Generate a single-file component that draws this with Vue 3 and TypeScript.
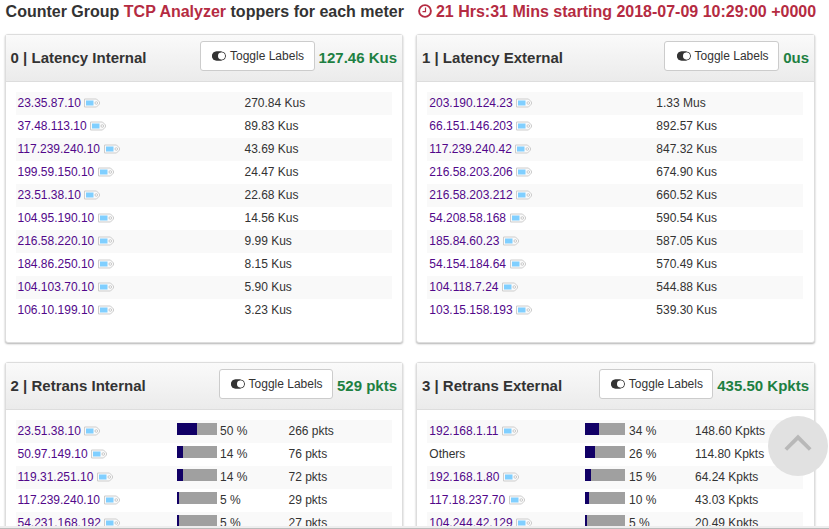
<script setup lang="ts">
interface Row { ip: string; value: string; pct?: number; fill?: number }
interface Panel { title: string; total: string; rows: Row[]; bars?: boolean }

const simple = (items: [string, string][]): Row[] => items.map(([ip, value]) => ({ ip, value }))
const shares = (items: [string, number, number, string][]): Row[] =>
  items.map(([ip, pct, fill, value]) => ({ ip, pct, fill, value }))

const panels: Panel[] = [
  { title: '0 | Latency Internal', total: '127.46 Kus', rows: simple([
    ['23.35.87.10', '270.84 Kus'], ['37.48.113.10', '89.83 Kus'], ['117.239.240.10', '43.69 Kus'],
    ['199.59.150.10', '24.47 Kus'], ['23.51.38.10', '22.68 Kus'], ['104.95.190.10', '14.56 Kus'],
    ['216.58.220.10', '9.99 Kus'], ['184.86.250.10', '8.15 Kus'], ['104.103.70.10', '5.90 Kus'],
    ['106.10.199.10', '3.23 Kus'],
  ]) },
  { title: '1 | Latency External', total: '0us', rows: simple([
    ['203.190.124.23', '1.33 Mus'], ['66.151.146.203', '892.57 Kus'], ['117.239.240.42', '847.32 Kus'],
    ['216.58.203.206', '674.90 Kus'], ['216.58.203.212', '660.52 Kus'], ['54.208.58.168', '590.54 Kus'],
    ['185.84.60.23', '587.05 Kus'], ['54.154.184.64', '570.49 Kus'], ['104.118.7.24', '544.88 Kus'],
    ['103.15.158.193', '539.30 Kus'],
  ]) },
  { title: '2 | Retrans Internal', total: '529 pkts', bars: true, rows: shares([
    ['23.51.38.10', 50, 20, '266 pkts'], ['50.97.149.10', 14, 5.6, '76 pkts'],
    ['119.31.251.10', 14, 5.6, '72 pkts'], ['117.239.240.10', 5, 2, '29 pkts'],
    ['54.231.168.192', 5, 2, '27 pkts'],
  ]) },
  { title: '3 | Retrans External', total: '435.50 Kpkts', bars: true, rows: shares([
    ['192.168.1.11', 34, 13.6, '148.60 Kpkts'], ['Others', 26, 10.4, '114.80 Kpkts'],
    ['192.168.1.80', 15, 6, '64.24 Kpkts'], ['117.18.237.70', 10, 4, '43.03 Kpkts'],
    ['104.244.42.129', 5, 2, '20.49 Kpkts'],
  ]) },
]
</script>

<template>
  <div class="page">
    <h4 class="heading">
      <span class="lead">Counter Group <span class="red">TCP Analyzer</span> toppers for each meter</span>
      <span class="red when">
        <svg class="clock" width="14" height="14" viewBox="0 0 14 14">
          <circle cx="7" cy="7" r="5.9" fill="none" stroke="currentColor" stroke-width="1.9" />
          <path d="M7.5 3.5v4.2H4.5" fill="none" stroke="currentColor" stroke-width="1.2" />
        </svg>
        <span>21 Hrs:31 Mins starting 2018-07-09 10:29:00 +0000</span>
      </span>
    </h4>
    <div class="grid">
      <section v-for="(p, i) in panels" :key="p.title" class="panel" :class="'p' + i">
        <header class="head">
          <span class="title">{{ p.title }}</span>
          <button class="toggle" type="button">
            <svg width="14" height="10" viewBox="0 0 14 10">
              <rect x=".5" y="1" width="13" height="8" rx="4" fill="#fff" stroke="#333" stroke-width="1" />
              <path d="M4.5.5h5v9h-5a4.5 4.5 0 0 1 0-9z" fill="#333" />
              <circle cx="9.4" cy="5" r="3.4" fill="#fff" />
            </svg>
            <span>Toggle Labels</span>
          </button>
          <span class="total">{{ p.total }}</span>
        </header>
        <div class="table">
          <div v-for="r in p.rows" :key="r.ip" class="row" :class="{ bars: p.bars }">
            <span class="host" :class="{ link: r.ip !== 'Others' }">
              <span>{{ r.ip }}</span>
              <svg v-if="r.ip !== 'Others'" class="tag" width="16" height="10" viewBox="0 0 16 10">
                <path d="M.5 1h12L15.5 4v2l-3 3H.5z" fill="#fafafa" stroke="#cdcdcd" stroke-width="1" />
                <rect x="2" y="2.5" width="7.5" height="5" fill="#80cfff" />
                <circle cx="12.3" cy="5" r="1.3" fill="#fff" stroke="#b5b5b5" stroke-width=".7" />
              </svg>
            </span>
            <span v-if="p.bars" class="share">
              <span class="bar"><span class="fill" :style="{ width: r.fill + 'px' }" /></span>
              <span>{{ r.pct }} %</span>
            </span>
            <span>{{ r.value }}</span>
          </div>
        </div>
      </section>
    </div>
    <div class="bottom" />
    <button class="top" type="button" aria-label="Top">
      <svg width="28" height="18" viewBox="0 0 28 18">
        <path d="M1.8 15.5 14 3.3l12.2 12.2" fill="none" stroke="#b8b8b8" stroke-width="3.8" />
      </svg>
    </button>
  </div>
</template>

<style>
body { margin: 0; background: #fff; }
</style>

<style scoped>
* { box-sizing: border-box; }
.page {
  position: relative; width: 829px; height: 529px; overflow: hidden;
  font: 12px/17px "Liberation Sans", Arial, sans-serif; color: #333;
}
.heading {
  display: flex; margin: 0; padding: 2px 0 0 5.6px; height: 34px;
  font-size: 16px; line-height: 20px; font-weight: bold; white-space: nowrap;
}
.lead { width: 412px; flex: none; }
.red { color: #b52b42; }
.when { display: flex; gap: 4.3px; }
.clock { margin-top: 2px; }
.grid { display: grid; grid-template-columns: 398px 399px; column-gap: 13px; row-gap: 19px; padding-left: 5px; }
.panel {
  height: 309px; border: 1px solid #ddd; border-radius: 3px; background: #fff;
  box-shadow: 0 1px 2px rgba(0, 0, 0, .3);
}
.head {
  display: flex; height: 47px; padding: 6px 5px 0 4.6px; border-bottom: 1px solid #ddd;
  background: linear-gradient(#fafafa, #ebebeb); font-size: 15px; font-weight: bold; line-height: 34px;
}
.p1 .head, .p3 .head { padding-left: 5px; }
.title { flex: 1; }
.toggle {
  display: flex; align-items: center; gap: 4px; width: 115px; height: 30px; padding: 0 0 1px 11.4px;
  border: 1px solid #ccc; border-radius: 3px; background: #fff; color: #333;
  font: 12px/18px "Liberation Sans", Arial, sans-serif; white-space: nowrap;
}
.p2 .toggle, .p3 .toggle { width: 114px; padding-left: 10.6px; }
.total { margin-left: 4px; color: #1d8042; }
.table { padding: 10px 10px 0; }
.p1 .table, .p3 .table { padding-right: 11px; }
.row {
  display: grid; grid-template-columns: 227px 1fr; height: 23px; padding: 2px 0 0 1.5px;
  line-height: 18px; white-space: nowrap;
}
.p1 .row, .p3 .row { padding-left: 2.3px; }
.row.bars { grid-template-columns: 159.5px 111.5px 1fr; }
.p3 .row.bars { grid-template-columns: 155.7px 110px 1fr; }
.row:nth-child(odd) { background: #f9f9f9; }
.host { display: flex; gap: 3.5px; }
.link { color: #52088a; }
.tag { margin-top: 4px; }
.share { display: flex; gap: 3px; }
.p3 .share { gap: 4px; }
.bar { width: 40px; height: 12px; margin-top: 1px; background: #a0a0a0; }
.fill { display: block; height: 12px; background: #110066; }
.bottom { position: absolute; left: 0; right: 0; bottom: 0; height: 3px; background: #eee; border-bottom: 1px solid #bbb; }
.top {
  position: absolute; left: 768px; top: 416px; width: 60px; height: 60px; padding: 0 0 6px;
  border: 0; border-radius: 50%; background: #e1e1e1; display: flex; align-items: center; justify-content: center;
}
</style>
